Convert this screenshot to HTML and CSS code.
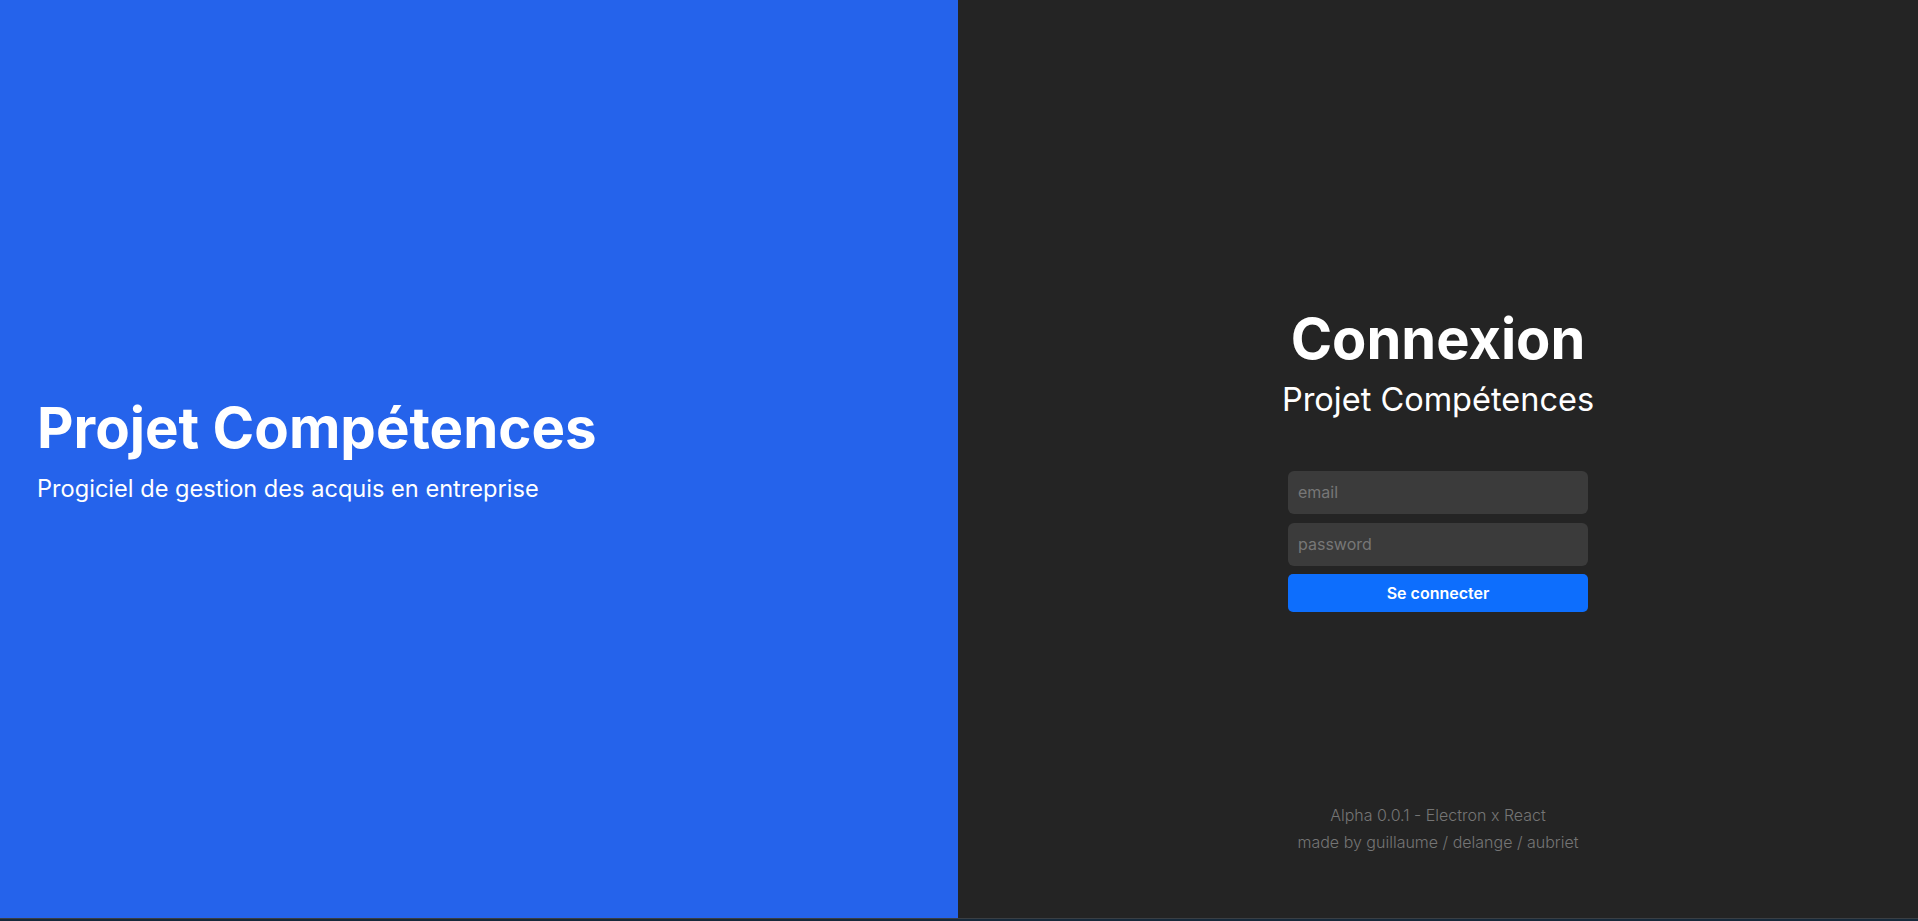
FILE: index.html
```html
<!DOCTYPE html>
<html lang="fr">
<head>
<meta charset="utf-8">
<title>Projet Compétences - Connexion</title>
<link rel="stylesheet" href="styles.css">
</head>
<body>
<div class="app">
  <main class="split">
    <section class="hero">
      <h1 class="hero-title">Projet Compétences</h1>
      <p class="hero-sub">Progiciel de gestion des acquis en entreprise</p>
    </section>
    <section class="login">
      <div class="login-top"></div>
      <div class="login-box">
        <h2 class="login-title">Connexion</h2>
        <p class="login-sub">Projet Compétences</p>
        <form class="login-form">
          <input class="field" type="email" placeholder="email">
          <input class="field" type="password" placeholder="password">
          <button class="btn" type="button">Se connecter</button>
        </form>
      </div>
      <footer class="login-foot">
        <p>Alpha 0.0.1 - Electron x React</p>
        <p>made by guillaume / delange / aubriet</p>
      </footer>
    </section>
  </main>
  <div class="strip"></div>
</div>
</body>
</html>
```

FILE: styles.css
```css
* { box-sizing: border-box; }
html, body { margin: 0; padding: 0; }
body {
  font-family: Inter, "Noto Sans", sans-serif;
  background: #242424;
  height: 921px;
  overflow: hidden;
}
.app {
  display: flex;
  flex-direction: column;
  height: 921px;
}
.split {
  display: grid;
  grid-template-columns: 958px 1fr;
  height: 918px;
}
.strip {
  height: 3px;
  background: #16293a;
  border-top: 1px solid #3a3f44;
}
.hero {
  background: #2563eb;
  color: #fff;
  display: flex;
  flex-direction: column;
  justify-content: center;
  padding: 0 0 18px 37px;
}
.hero-title {
  margin: 0;
  font-size: 56.4px;
  font-weight: 700;
  line-height: 1.2;
}
.hero-sub {
  margin: 9px 0 0;
  font-size: 23.6px;
  font-weight: 400;
  line-height: 1.5;
}
.login {
  background: #242424;
  color: #fff;
  display: grid;
  grid-template-rows: 1fr auto 1fr;
  justify-items: center;
}
.login-box {
  display: flex;
  flex-direction: column;
  align-items: center;
}
.login-title {
  margin: 0;
  font-size: 56px;
  font-weight: 700;
  line-height: 1.2;
}
.login-sub {
  margin: 6px 0 0;
  font-size: 32.5px;
  font-weight: 400;
  line-height: 1.2;
}
.login-form {
  margin-top: 52px;
  width: 300px;
  display: flex;
  flex-direction: column;
  gap: 9px;
}
.field {
  height: 43px;
  border: none;
  border-radius: 6px;
  background: #3b3b3b;
  color: #fff;
  font-family: Inter, sans-serif;
  font-size: 16px;
  padding: 0 10px;
  outline: none;
}
.field::placeholder { color: #777777; }
.btn {
  height: 38px;
  border: none;
  border-radius: 5px;
  background: #0d6efd;
  color: #fff;
  font-family: Inter, sans-serif;
  font-size: 16px;
  font-weight: 600;
  margin-top: -1px;
}
.login-foot {
  align-self: end;
  padding-bottom: 62px;
  text-align: center;
  color: #757575;
  font-size: 16px;
  font-weight: 300;
  line-height: 27px;
}
.login-foot p { margin: 0; }
```
